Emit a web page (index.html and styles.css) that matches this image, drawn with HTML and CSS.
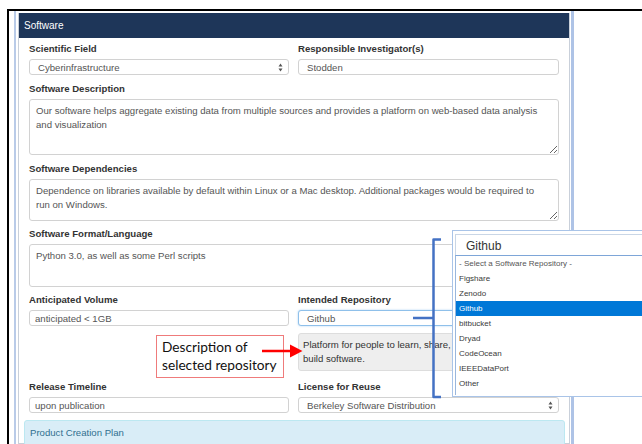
FILE: index.html
```html
<!DOCTYPE html>
<html lang="en">
<head>
<meta charset="utf-8">
<title>Software</title>
<link rel="stylesheet" href="styles.css">
</head>
<body>
<div class="frame">
  <div class="shell">
    <section class="panel">
      <header class="panel-heading">Software</header>
      <div class="panel-body">
        <div class="fields">
          <div class="row two gap7">
            <div class="group">
              <label class="label">Scientific Field</label>
              <div class="control select">
                <span class="select-value">Cyberinfrastructure</span>
                <svg class="spin" width="5" height="9" viewBox="0 0 5 9"><path d="M0.5 3.5 L2.5 0.5 L4.5 3.5 Z M0.5 5.5 L4.5 5.5 L2.5 8.5 Z"/></svg>
              </div>
            </div>
            <div class="group">
              <label class="label">Responsible Investigator(s)</label>
              <input class="control inset" type="text" value="Stodden">
            </div>
          </div>

          <div class="row gap7">
            <label class="label">Software Description</label>
            <textarea class="control area h56">Our software helps aggregate existing data from multiple sources and provides a platform on web-based data analysis and visualization</textarea>
          </div>

          <div class="row gap6">
            <label class="label">Software Dependencies</label>
            <textarea class="control area h42">Dependence on libraries available by default within Linux or a Mac desktop. Additional packages would be required to run on Windows.</textarea>
          </div>

          <div class="row gap6">
            <label class="label">Software Format/Language</label>
            <textarea class="control area h43">Python 3.0, as well as some Perl scripts</textarea>
          </div>

          <div class="row two gap9">
            <div class="group">
              <label class="label">Anticipated Volume</label>
              <input class="control" type="text" value="anticipated < 1GB">
            </div>
            <div class="group">
              <label class="label">Intended Repository</label>
              <input class="control inset focused" type="text" value="Github">
              <div class="repo-note">Platform for people to learn, share,<br>build software.</div>
            </div>
          </div>

          <div class="row two gap7">
            <div class="group">
              <label class="label">Release Timeline</label>
              <input class="control" type="text" value="upon publication">
            </div>
            <div class="group">
              <label class="label">License for Reuse</label>
              <div class="control select">
                <span class="select-value">Berkeley Software Distribution</span>
                <svg class="spin" width="5" height="9" viewBox="0 0 5 9"><path d="M0.5 3.5 L2.5 0.5 L4.5 3.5 Z M0.5 5.5 L4.5 5.5 L2.5 8.5 Z"/></svg>
              </div>
            </div>
          </div>
        </div>

        <div class="callout">Product Creation Plan</div>
      </div>
    </section>
  </div>
</div>

<!-- open repository picker -->
<div class="combo-pop">
  <div class="combo-field">Github</div>
  <ul class="combo-list">
    <li class="muted">- Select a Software Repository -</li>
    <li>Figshare</li>
    <li>Zenodo</li>
    <li class="active">Github</li>
    <li>bitbucket</li>
    <li>Dryad</li>
    <li>CodeOcean</li>
    <li>IEEEDataPort</li>
    <li>Other</li>
  </ul>
</div>

<!-- callout note with pointer -->
<div class="note">Description of<br>selected repository</div>

<svg class="marks" width="642" height="444" viewBox="0 0 642 444">
  <path class="brace" d="M441 239.5 H433.5 V397 H441 M433.5 318 H413"/>
  <path class="arrow-shaft" d="M262 351 H292"/>
  <path class="arrow-head" d="M290 344.5 L302.5 351 L290 357.5 Z"/>
</svg>
</body>
</html>
```

FILE: styles.css
```css
* {
  box-sizing: border-box;
}

html,
body {
  margin: 0;
  height: 100%;
  overflow: hidden;
  background: #fff;
}

body {
  position: relative;
  font-family: "Liberation Sans", Arial, sans-serif;
  font-size: 9.6px;
  color: #333;
}

/* outer document frame */
.frame {
  margin: 9px 0 0 7px;
  height: 435px;
  border-top: 2px solid #000;
  border-left: 2px solid #000;
  padding-left: 5px;
}

.shell {
  width: 560px;
  height: 100%;
  border-left: 2px solid #b9cbe8;
  border-right: 3px solid #aec3e6;
  padding: 2px 1px 0 2px;
}

.panel {
  height: 100%;
  background: #fff;
  border: 1px solid #c9d0da;
  border-top: 0;
}

.panel-heading {
  height: 25px;
  line-height: 25px;
  padding-left: 5px;
  background: #1e3659;
  color: #fff;
  font-size: 10px;
}

.panel-body {
  padding: 4px 4px 0 5px;
}

.fields {
  padding: 0 6px 0 5px;
}

.row.two {
  display: grid;
  grid-template-columns: 260px 1fr;
  column-gap: 9px;
}

.gap6 { margin-bottom: 6px; }
.gap7 { margin-bottom: 7px; }
.gap9 { margin-bottom: 9px; }

.label {
  display: block;
  font-weight: bold;
  line-height: 14px;
  margin-bottom: 3px;
  color: #333;
}

.control {
  display: block;
  width: 100%;
  height: 16px;
  margin: 0;
  padding: 0 5px;
  border: 1px solid #d2d2d2;
  border-radius: 3px;
  background: #fff;
  font: inherit;
  line-height: 14px;
  color: #555;
  outline: none;
}

.control.inset {
  padding-left: 8px;
}

.control.focused {
  border-color: #8fc0ea;
  box-shadow: 0 0 2px rgba(102, 175, 233, 0.6);
}

.select {
  display: flex;
  align-items: center;
  justify-content: space-between;
  padding: 1px 5px 0 8px;
}

.spin {
  fill: #555;
  flex: none;
}

.area {
  padding: 4px 12px 4px 6px;
  resize: vertical;
  overflow: hidden;
}

.h56 { height: 56px; }
.h42 { height: 42px; }
.h43 { height: 43px; }

.repo-note {
  margin-top: 7px;
  padding: 4px 5px 4px 4px;
  line-height: 14px;
  background: #eee;
  border: 1px solid #ddd;
  border-radius: 3px;
  color: #333;
}

.callout {
  height: 40px;
  padding: 5px 5px 4px;
  line-height: 14px;
  background: #d9edf7;
  border: 1px solid #bce8f1;
  border-radius: 3px;
  color: #31708f;
}

/* repository drop-down, shown open */
.combo-pop {
  position: absolute;
  left: 452px;
  top: 230px;
  width: 210px;
  height: 167px;
  padding: 3px 0 0 2px;
  background: #fff;
  border: 1px solid #a9c4e8;
}

.combo-field {
  height: 21px;
  padding: 3px 0 0 10px;
  border: 1px solid #c9d6e6;
  border-bottom: 0;
  font-size: 12px;
  line-height: 16px;
  color: #333;
}

.combo-list {
  list-style: none;
  margin: 0;
  padding: 0 0 4px;
  border-top: 1px solid #7ea6d8;
  border-left: 1px solid #9ab7dd;
  font-size: 8px;
  color: #3a3a3a;
}

.combo-list li {
  height: 15px;
  line-height: 15px;
  padding-left: 3px;
}

.combo-list .muted {
  color: #555;
}

.combo-list .active {
  background: #0078d7;
  color: #fff;
}

/* annotation */
.note {
  position: absolute;
  left: 156px;
  top: 335px;
  width: 128px;
  height: 43px;
  padding: 2px 5px;
  background: #fff;
  border: 1px solid #ef7b7b;
  font-family: Lato, "Open Sans", sans-serif;
  font-size: 13.7px;
  line-height: 18px;
  color: #111;
  white-space: nowrap;
}

.marks {
  position: absolute;
  left: 0;
  top: 0;
  pointer-events: none;
}

.brace {
  fill: none;
  stroke: #4472c4;
  stroke-width: 2.5;
  stroke-linejoin: round;
}

.arrow-shaft {
  stroke: #f00;
  stroke-width: 2.5;
}

.arrow-head {
  fill: #f00;
}
```
